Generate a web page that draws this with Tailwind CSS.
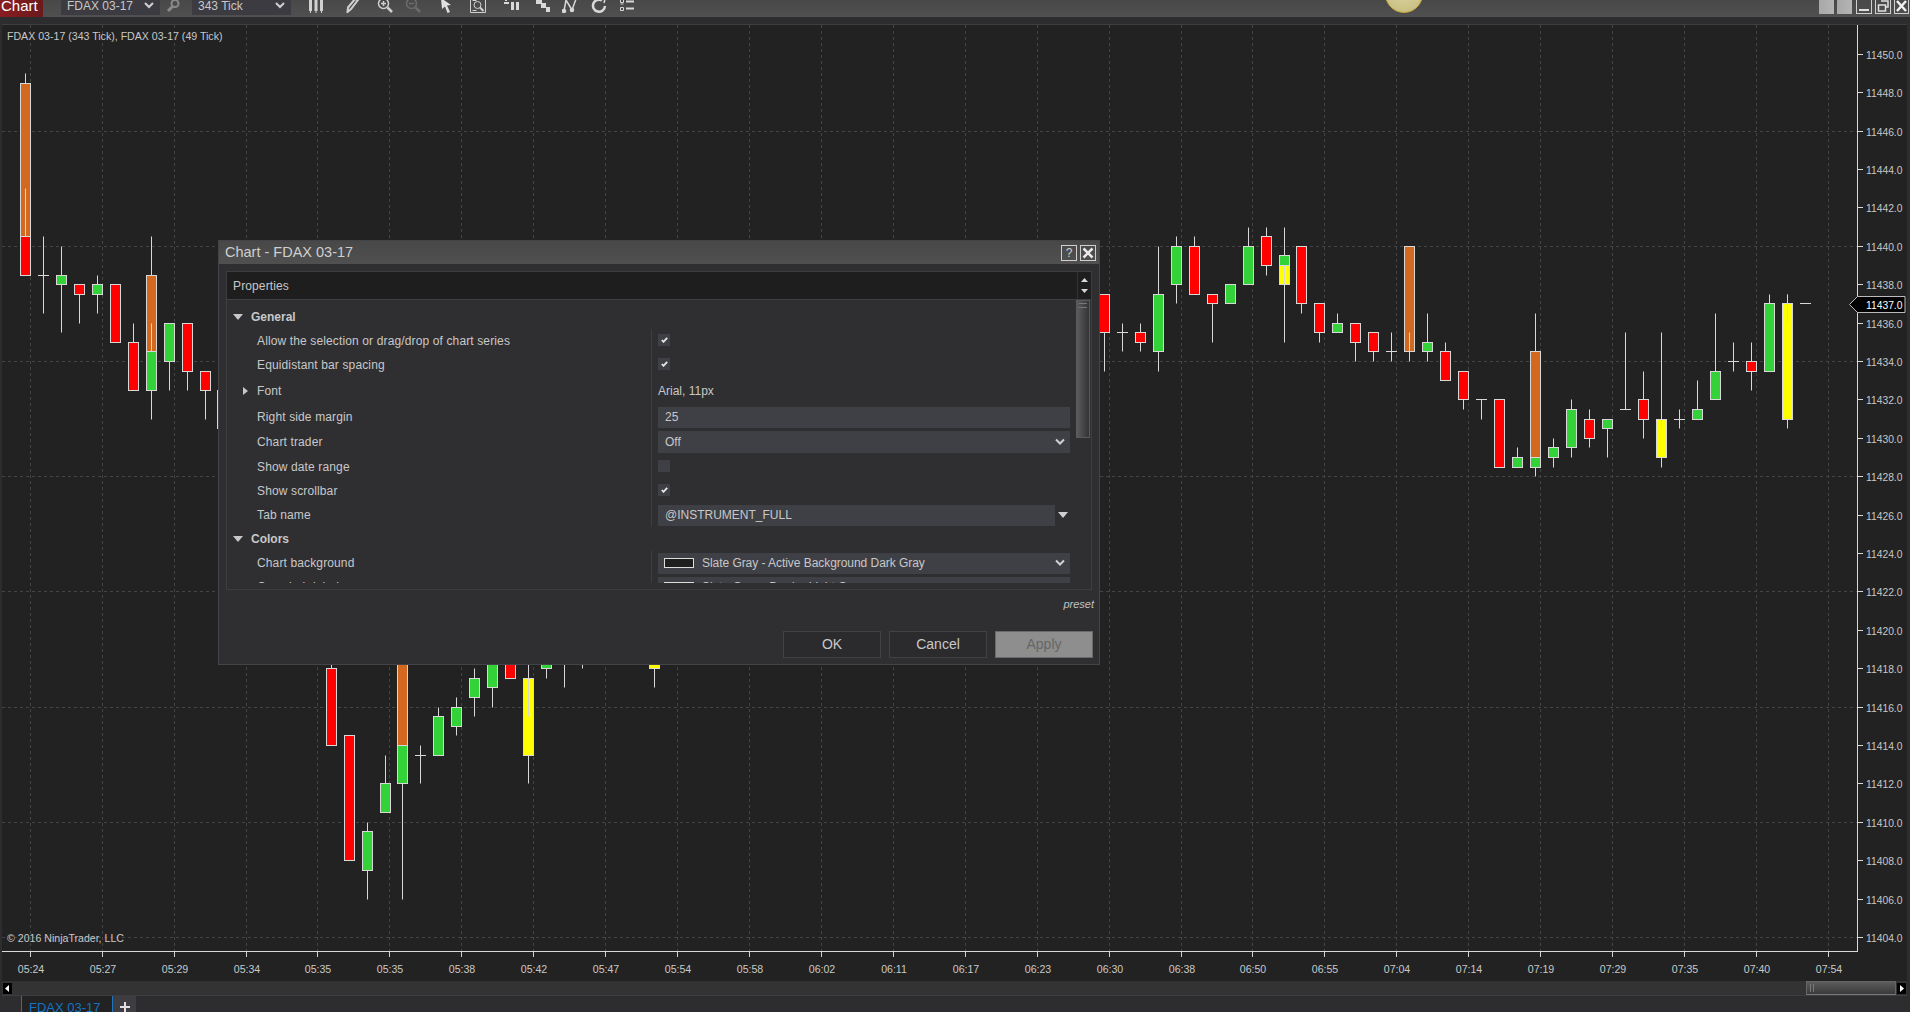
<!DOCTYPE html>
<html lang="en">
<head>
    <meta charset="UTF-8">
    <title>Chart - FDAX 03-17</title>
    <script src="https://cdn.jsdelivr.net/npm/@tailwindcss/browser@4"></script>
</head>
<body class="bg-[#2d2d30]">
<div class="relative w-[1910px] h-[1012px] overflow-hidden flex flex-col bg-[#2d2d30] text-[#c8c8c8] [font-family:'Liberation_Sans',sans-serif]">

    <!-- toolbar, cut off at the top like the reference -->
    <div class="h-[17px] shrink-0 flex items-start bg-gradient-to-b from-[#484848] to-[#505050] overflow-hidden text-[12px]">
        <div class="w-[43px] h-[17px] bg-gradient-to-r from-[#8a1c20] to-[#6a1a1c] text-white text-[15px] leading-[12px] pl-[1px]">Chart</div>
        <div class="ml-[18px] w-[99px] h-[15px] bg-[#3b3b41] flex items-start pl-[6px] leading-[13px]">
            <span>FDAX 03-17</span>
            <svg class="ml-auto mr-[6px] mt-[1px]" width="10" height="9" viewBox="0 0 10 9" fill="none" stroke="#d0d0d0" stroke-width="2"><path d="M1 2l4 4 4-4"/></svg>
        </div>
        <svg class="ml-[5px] -mt-[2px]" width="16" height="16" viewBox="0 0 16 16" fill="none" stroke="#8a8a8a" stroke-width="2"><circle cx="10" cy="5.500" r="3.500"/><path d="M7.500 8.500L3 13" stroke-width="3"/></svg>
        <div class="ml-[11px] w-[99px] h-[15px] bg-[#3b3b41] flex items-start pl-[6px] leading-[13px]">
            <span>343 Tick</span>
            <svg class="ml-auto mr-[6px] mt-[1px]" width="10" height="9" viewBox="0 0 10 9" fill="none" stroke="#d0d0d0" stroke-width="2"><path d="M1 2l4 4 4-4"/></svg>
        </div>
        <svg class="ml-[17px] -mt-[3px]" width="16" height="16" viewBox="0 0 16 16" fill="#d0d0d0"><rect x="1" y="3" width="3" height="11"/><rect x="6.500" y="2" width="3" height="12"/><rect x="12" y="3" width="3" height="11"/><rect x="2" y="14" width="1" height="2"/><rect x="7.500" y="14" width="1" height="2"/><rect x="13" y="14" width="1" height="2"/></svg>
        <svg class="ml-[21px] -mt-[3px]" width="16" height="16" viewBox="0 0 16 16" fill="none" stroke="#d0d0d0" stroke-width="2"><path d="M13 3L6 12 2.500 15l.5-4.500L10 2z"/></svg>
        <svg class="ml-[16px] -mt-[3px]" width="16" height="16" viewBox="0 0 16 16" fill="none" stroke="#d0d0d0" stroke-width="1.500"><circle cx="6.500" cy="6.500" r="5"/><path d="M4 6.500h5M6.500 4v5"/><path d="M10.500 10.500L15 15" stroke-width="2.500"/></svg>
        <svg class="ml-[12px] -mt-[3px]" width="16" height="16" viewBox="0 0 16 16" fill="none" stroke="#6c6c6c" stroke-width="1.500"><circle cx="6.500" cy="6.500" r="5"/><path d="M4 6.500h5"/><path d="M10.500 10.500L15 15" stroke-width="2.500"/></svg>
        <svg class="ml-[17px] -mt-[3px]" width="16" height="16" viewBox="0 0 16 16" fill="#e0e0e0"><path d="M3 1l10 7-4 .5L12 15l-2.500 1L7 9.500 4 12z"/></svg>
        <svg class="ml-[16px] -mt-[3px]" width="16" height="16" viewBox="0 0 16 16" fill="none" stroke="#d0d0d0"><path d="M.5.500h15v15H.5z"/><circle cx="7.500" cy="8" r="3.500"/><path d="M10 10.500l3.500 3.500" stroke-width="2"/><path d="M2.500 3.500h4M2.500 13.500h4"/></svg>
        <svg class="ml-[18px] -mt-[3px]" width="16" height="16" viewBox="0 0 16 16" fill="#d8d8d8"><rect x="0" y="5" width="5" height="2"/><rect x="7" y="5" width="3" height="8"/><rect x="12" y="5" width="3" height="8"/><rect x="1" y="2" width="2" height="2"/></svg>
        <svg class="ml-[15px] -mt-[3px]" width="16" height="16" viewBox="0 0 16 16" fill="#d8d8d8"><rect x="1" y="2" width="6" height="5"/><rect x="6" y="6" width="5" height="5"/><rect x="11" y="10" width="4" height="5"/></svg>
        <svg class="ml-[11px] -mt-[3px]" width="16" height="16" viewBox="0 0 16 16" fill="none" stroke="#d8d8d8" stroke-width="1.500"><path d="M2 14L4 3l6 10 4-11"/><circle cx="2" cy="14" r="1.500" fill="#d8d8d8"/><circle cx="10" cy="13" r="1.500" fill="#d8d8d8"/></svg>
        <svg class="ml-[13px] -mt-[3px]" width="16" height="16" viewBox="0 0 16 16" fill="none" stroke="#d8d8d8" stroke-width="2.500"><path d="M11 3.500A6 6 0 1 0 14 9"/><path d="M10 1l4 1-1 4" stroke-width="1.500"/></svg>
        <svg class="ml-[12px] -mt-[3px]" width="16" height="16" viewBox="0 0 16 16" fill="none" stroke="#d8d8d8"><path d="M1.500 2.500h3v3h-3zM1.500 10.500h3v3h-3z"/><path d="M7 4.500h8M7 11.500h8" stroke-width="2"/><path d="M1.500 7h3"/></svg>

        <div class="ml-auto flex items-start gap-[3px] pr-[1px]">
            <div class="w-[15px] h-[14px] bg-gradient-to-r from-[#a8a8a8] to-[#b4b4b4]"></div>
            <div class="w-[15px] h-[14px] mr-[1px] bg-gradient-to-r from-[#a8a8a8] to-[#b4b4b4]"></div>
            <div class="w-[16px] h-[14px] border border-t-0 border-[#cfcfcf] flex items-end justify-center pb-[2px]"><div class="w-[10px] h-[2px] bg-[#e0e0e0]"></div></div>
            <div class="w-[16px] h-[14px] border border-t-0 border-[#cfcfcf]">
                <svg width="14" height="13" viewBox="0 0 14 13" fill="none" stroke="#e0e0e0" stroke-width="1.500"><path d="M5 1h7v6H9.500M2.500 5h7v6h-7z"/></svg>
            </div>
            <div class="w-[15px] h-[14px] border border-t-0 border-[#cfcfcf]">
                <svg width="13" height="13" viewBox="0 0 13 13" fill="none" stroke="#f0f0f0" stroke-width="2.500"><path d="M2 1l9 10M11 1l-9 10"/></svg>
            </div>
        </div>
    </div>
    <!-- yellow light in the title bar -->
    <div class="absolute left-[1385px] -top-[25px] w-[38px] h-[38px] rounded-full border border-[#c9a53a] bg-[radial-gradient(circle_at_50%_30%,#ddd8a8,#c4bb78)]"></div>

    <div class="h-[7px] shrink-0 bg-[#2d2d30]"></div>

    <!-- chart -->
    <div class="relative h-[957px] shrink-0 mx-[2px] mr-[3px] border-t border-[#3e3e42] bg-[#222222]">
        <svg id="chart" class="absolute -left-[2px] top-0" width="1910" height="956" viewBox="0 25 1910 956" font-size="10.600" fill="#c8c8c8"></svg>
    </div>

    <!-- horizontal scrollbar -->
    <div class="h-[15px] shrink-0 mx-[2px] mr-[3px] bg-[#333333] border-b border-[#3e3e42] flex items-center">
        <div class="ml-[1px] w-[9px] h-[11px] bg-black flex items-center justify-center"><svg width="5" height="7" viewBox="0 0 5 7" fill="#fff"><path d="M4 0v7L0 3.500z"/></svg></div>
        <div class="ml-auto w-[90px] h-[14px] border border-[#666] border-b-[#777] bg-gradient-to-b from-[#5c5c5c] to-[#3a3a3a] flex items-center pl-[3px] gap-[2px]">
            <div class="w-px h-[8px] bg-[#777]"></div><div class="w-px h-[8px] bg-[#777]"></div>
        </div>
        <div class="ml-[1px] mr-[1px] w-[9px] h-[11px] bg-black flex items-center justify-center"><svg width="5" height="7" viewBox="0 0 5 7" fill="#fff"><path d="M1 0v7l4-3.500z"/></svg></div>
    </div>

    <!-- tabs -->
    <div class="flex-1 flex items-start pl-[21px]">
        <div class="w-[92px] h-[17px] bg-[#222222] border-x border-[#1f73bd] text-[#1573c4] text-[13px] leading-[23px] pl-[7px]">FDAX 03-17</div>
        <div class="w-[23px] h-[17px] bg-[#3e3e42] flex items-center justify-center pt-[5px]">
            <svg width="10" height="10" viewBox="0 0 10 10" fill="#e0e0e0"><path d="M4 0h2v4h4v2H6v4H4V6H0V4h4z"/></svg>
        </div>
    </div>

    <!-- properties dialog -->
    <div class="absolute left-[218px] top-[240px] w-[882px] h-[425px] bg-[#2f2f32] border border-[#444448] flex flex-col text-[12px]">
        <div class="h-[23px] shrink-0 bg-gradient-to-b from-[#484848] to-[#505050] flex items-center pl-[6px] pr-[3px] text-[14.500px] text-[#cfcfcf]">
            <span>Chart - FDAX 03-17</span>
            <div class="ml-auto w-[16px] h-[16px] border border-[#cfcfcf] flex items-center justify-center text-[12px] leading-none">?</div>
            <div class="ml-[3px] w-[16px] h-[16px] border border-[#cfcfcf] flex items-center justify-center">
                <svg width="12" height="12" viewBox="0 0 12 12" fill="none" stroke="#e8e8e8" stroke-width="2.500"><path d="M1.500 1.500l9 9M10.500 1.500l-9 9"/></svg>
            </div>
        </div>

        <div class="ml-[7px] mt-[7px] w-[866px] h-[319px] shrink-0 border border-[#3e3e42] flex flex-col">
            <div class="h-[28px] shrink-0 bg-[#1e1e1e] border-b border-[#404044] flex items-center pl-[6px]">
                <span class="tracking-[0.13px]">Properties</span>
                <div class="ml-auto w-[14px] h-full border-l border-[#333] flex flex-col items-center justify-center gap-[7px]">
                    <svg width="7" height="4" viewBox="0 0 7 4" fill="#d8d8d8"><path d="M0 4h7L3.500 0z"/></svg>
                    <svg width="7" height="4" viewBox="0 0 7 4" fill="#d8d8d8"><path d="M0 0h7L3.500 4z"/></svg>
                </div>
            </div>

            <div class="flex h-[283px] overflow-hidden">
                <div class="flex-1 pt-[5px]">
                    <div class="h-[24px] flex items-center pl-[6px] font-bold">
                        <svg width="10" height="6" viewBox="0 0 10 6" fill="#c8c8c8"><path d="M0 0h10L5 6z"/></svg>
                        <span class="ml-[8px]">General</span>
                    </div>
                    <div class="h-[24px] flex">
                        <div class="w-[424px] pl-[30px] flex items-center tracking-[0.13px]">Allow the selection or drag/drop of chart series</div>
                        <div class="flex-1 border-l border-[#3e3e42] pl-[6px] flex items-center">
                            <div class="w-[12px] h-[12px] mb-[2px] bg-[#3f3f46] flex items-center justify-center"><svg width="7" height="6" viewBox="0 0 7 6" fill="none" stroke="#e8e8e8" stroke-width="1.800"><path d="M.8 3l1.700 1.800L6.200.8"/></svg></div>
                        </div>
                    </div>
                    <div class="h-[24px] flex">
                        <div class="w-[424px] pl-[30px] flex items-center tracking-[0.13px]">Equidistant bar spacing</div>
                        <div class="flex-1 border-l border-[#3e3e42] pl-[6px] flex items-center">
                            <div class="w-[12px] h-[12px] mb-[2px] bg-[#3f3f46] flex items-center justify-center"><svg width="7" height="6" viewBox="0 0 7 6" fill="none" stroke="#e8e8e8" stroke-width="1.800"><path d="M.8 3l1.700 1.800L6.200.8"/></svg></div>
                        </div>
                    </div>
                    <div class="h-[28px] flex">
                        <div class="w-[424px] pl-[16px] flex items-center tracking-[0.13px]">
                            <svg width="5" height="8" viewBox="0 0 5 8" fill="#c8c8c8"><path d="M0 0l5 4-5 4z"/></svg>
                            <span class="ml-[9px]">Font</span>
                        </div>
                        <div class="flex-1 border-l border-[#3e3e42] pl-[6px] flex items-center">Arial, 11px</div>
                    </div>
                    <div class="h-[24px] flex">
                        <div class="w-[424px] pl-[30px] flex items-center tracking-[0.13px]">Right side margin</div>
                        <div class="flex-1 border-l border-[#3e3e42] pl-[6px] flex items-center">
                            <div class="w-[412px] h-[21px] bg-[#3f3f46] pl-[7px] flex items-center">25</div>
                        </div>
                    </div>
                    <div class="h-[26px] flex">
                        <div class="w-[424px] pl-[30px] flex items-center tracking-[0.13px]">Chart trader</div>
                        <div class="flex-1 border-l border-[#3e3e42] pl-[6px] flex items-center">
                            <div class="w-[412px] h-[22px] bg-[#3f3f46] pl-[7px] pr-[5px] flex items-center">
                                <span>Off</span>
                                <svg class="ml-auto" width="10" height="8" viewBox="0 0 10 8" fill="none" stroke="#d0d0d0" stroke-width="2"><path d="M1 1.500l4 4 4-4"/></svg>
                            </div>
                        </div>
                    </div>
                    <div class="h-[24px] flex">
                        <div class="w-[424px] pl-[30px] flex items-center tracking-[0.13px]">Show date range</div>
                        <div class="flex-1 border-l border-[#3e3e42] pl-[6px] flex items-center">
                            <div class="w-[12px] h-[12px] mb-[2px] bg-[#3f3f46]"></div>
                        </div>
                    </div>
                    <div class="h-[24px] flex">
                        <div class="w-[424px] pl-[30px] flex items-center tracking-[0.13px]">Show scrollbar</div>
                        <div class="flex-1 border-l border-[#3e3e42] pl-[6px] flex items-center">
                            <div class="w-[12px] h-[12px] mb-[2px] bg-[#3f3f46] flex items-center justify-center"><svg width="7" height="6" viewBox="0 0 7 6" fill="none" stroke="#e8e8e8" stroke-width="1.800"><path d="M.8 3l1.700 1.800L6.200.8"/></svg></div>
                        </div>
                    </div>
                    <div class="h-[24px] flex">
                        <div class="w-[424px] pl-[30px] flex items-center tracking-[0.13px]">Tab name</div>
                        <div class="flex-1 border-l border-[#3e3e42] pl-[6px] flex items-center">
                            <div class="w-[397px] h-[21px] bg-[#3f3f46] pl-[7px] flex items-center">@INSTRUMENT_FULL</div>
                            <svg class="ml-[3px]" width="10" height="6" viewBox="0 0 10 6" fill="#d0d0d0"><path d="M0 0h10L5 6z"/></svg>
                        </div>
                    </div>
                    <div class="h-[24px] flex items-center pl-[6px] font-bold">
                        <svg width="10" height="6" viewBox="0 0 10 6" fill="#c8c8c8"><path d="M0 0h10L5 6z"/></svg>
                        <span class="ml-[8px]">Colors</span>
                    </div>
                    <div class="h-[24px] flex">
                        <div class="w-[424px] pl-[30px] flex items-center tracking-[0.13px]">Chart background</div>
                        <div class="flex-1 border-l border-[#3e3e42] pl-[6px] flex items-center">
                            <div class="w-[412px] h-[21px] bg-[#3f3f46] pl-[6px] pr-[5px] flex items-center">
                                <div class="w-[30px] h-[10px] bg-[#1f1f1f] border border-[#ddd]"></div>
                                <span class="ml-[8px] tracking-[-0.05px]">Slate Gray - Active Background Dark Gray</span>
                                <svg class="ml-auto" width="10" height="8" viewBox="0 0 10 8" fill="none" stroke="#d0d0d0" stroke-width="2"><path d="M1 1.500l4 4 4-4"/></svg>
                            </div>
                        </div>
                    </div>
                    <div class="h-[24px] flex">
                        <div class="w-[424px] pl-[30px] flex items-center tracking-[0.13px]">Crosshair label</div>
                        <div class="flex-1 border-l border-[#3e3e42] pl-[6px] flex items-center">
                            <div class="w-[412px] h-[21px] bg-[#3f3f46] pl-[6px] pr-[5px] flex items-center">
                                <div class="w-[30px] h-[10px] bg-[#555] border border-[#ddd]"></div>
                                <span class="ml-[8px]">Slate Gray - Border Light Gray</span>
                            </div>
                        </div>
                    </div>
                </div>
                <div class="w-[15px] shrink-0">
                    <div class="w-[14px] h-[138px] border border-[#5a5a5a] bg-gradient-to-r from-[#5c5c5c] to-[#333336] pt-[2px] pl-[2px] flex flex-col gap-[3px]">
                        <div class="w-[8px] h-px bg-[#777]"></div>
                        <div class="w-[8px] h-px bg-[#777]"></div>
                    </div>
                </div>
            </div>
        </div>

        <div class="mt-[7px] h-[14px] shrink-0 pr-[5px] flex items-center justify-end italic text-[11px] text-[#c0c0c0]">preset</div>
        <div class="mt-[20px] flex justify-end gap-[8px] pr-[6px] text-[14px]">
            <div class="w-[98px] h-[27px] bg-[#2b2b2e] border border-[#424246] flex items-center justify-center">OK</div>
            <div class="w-[98px] h-[27px] bg-[#2b2b2e] border border-[#424246] flex items-center justify-center">Cancel</div>
            <div class="w-[98px] h-[27px] bg-[#8e8e8e] border border-[#6a6a6a] text-[#666] flex items-center justify-center">Apply</div>
        </div>
    </div>
</div>

<script>
    const chart = document.getElementById("chart");
    const yOf = p => 246.3 + (11440 - p) * 19.2;
    const snap = v => Math.floor(v) + 0.5;
    const barX = n => snap(25.4 + 17.98 * n);
    const colors = { r: "#ff0000", g: "#32d238", o: "#d2691e", y: "#ffff00" };
    const times = ["05:24","05:27","05:29","05:34","05:35","05:35","05:38","05:42","05:47","05:54","05:58","06:02","06:11","06:17","06:23","06:30","06:38","06:50","06:55","07:04","07:14","07:19","07:29","07:35","07:40","07:54"];

    // [bar, colour, top, bottom, high, low] in price; no colour = only a dash at "top"
    const bars = [
        [0,"o",11448.5,11440.5,11449,null],[0,"r",11440.5,11438.5,null,null],
        [1,null,11438.5,0,11440.5,11436.5],[2,"g",11438.5,11438,11440,11435.5],[3,"r",11438,11437.5,null,11436],
        [4,"g",11438,11437.5,11438.5,11436.5],[5,"r",11438,11435,null,null],[6,"r",11435,11432.5,11436,null],
        [7,"o",11438.5,11434.5,11440.5,null],[7,"g",11434.5,11432.5,null,11431],
        [8,"g",11436,11434,null,11432.5],[9,"r",11436,11433.5,null,11432.5],[10,"r",11433.5,11432.5,null,11431],
        [17,"r",11418,11414,11420,null],[18,"r",11414.5,11408,null,null],[19,"g",11409.5,11407.5,11410,11406],
        [20,"g",11412,11410.5,11413.5,null],[21,"o",11420,11414,null,null],[21,"g",11414,11412,null,11406],
        [22,null,11413.5,0,11414,11412],[23,"g",11415.5,11413.5,11416,null],[24,"g",11416,11415,11416.5,11414.5],
        [25,"g",11417.5,11416.5,11418,11415.5],[26,"g",11420,11417,null,11416],[27,"r",11420,11417.5,null,null],
        [28,"y",11417.5,11413.5,11420,11412],[29,"g",11420,11418,null,11417.5],[35,"y",11420,11418,null,11417],
        [60,"r",11437.5,11435.5,null,11433.5],[61,null,11435.5,0,11436,11434.5],[62,"r",11435.5,11435,11436,11434.5],
        [63,"g",11437.5,11434.5,11440,11433.5],[64,"g",11440,11438,11440.5,11437],[65,"r",11440,11437.5,11440.5,null],
        [66,"r",11437.5,11437,null,11435],[67,"g",11438,11437,null,null],[68,"g",11440,11438,11441,null],
        [69,"r",11440.5,11439,11441,11438.5],[70,"g",11439.5,11439,11441,null],[70,"y",11439,11438,null,11435],
        [71,"r",11440,11437,null,11436.5],[72,"r",11437,11435.5,null,11435],[73,"g",11436,11435.5,11436.5,null],
        [74,"r",11436,11435,null,11434],[75,"r",11435.5,11434.5,null,11434],[76,null,11434.5,0,11435.5,11434],
        [77,"o",11440,11434.5,null,null],[78,"g",11435,11434.5,11436.5,11434],[79,"r",11434.5,11433,11435,null],
        [80,"r",11433.5,11432,null,11431.5],[81,null,11432,0,null,11431],[82,"r",11432,11428.5,null,null],
        [83,"g",11429,11428.5,11429.5,null],[84,"o",11434.5,11429,11436.5,null],[84,"g",11429,11428.5,null,11428],
        [85,"g",11429.5,11429,11430,11428.5],[86,"g",11431.5,11429.5,11432,11429],[87,"r",11431,11430,11431.5,11429.5],
        [88,"g",11431,11430.5,null,11429],[89,null,11431.5,0,11435.5,null],[90,"r",11432,11431,11433.5,11430],
        [91,"y",11431,11429,11435.5,11428.5],[92,null,11431,0,11431.5,11430.5],[93,"g",11431.5,11431,11433,null],
        [94,"g",11433.5,11432,11436.5,null],[95,null,11434,0,11435,11433.5],[96,"r",11434,11433.5,11435,11432.5],
        [97,"g",11437,11433.5,11437.5,null],[98,"y",11437,11431,11437.5,11430.5],[99,null,11437,0,null,null],
    ];
    // wicks of the second series, they lie over the bodies of the first
    const overWicks = [[0,11443,11440.5],[7,11436,11434.5],[28,11420,11415.5],[30,11420,11417],[31,11420,11418],[70,11439,11438],[77,11435.5,11434],[91,11431,11430.5],[98,11437.5,11436]];

    let s = "";
    const line = (x1, y1, x2, y2, stroke, dash) =>
        `<line x1="${x1}" y1="${y1}" x2="${x2}" y2="${y2}" stroke="${stroke}"${dash ? ' stroke-dasharray="3 3"' : ""}/>`;

    // grid
    for (let p = 11446; p >= 11404; p -= 6) s += line(2, snap(yOf(p)), 1857, snap(yOf(p)), "#444444", true);
    times.forEach((t, i) => {
        const x = snap(30.3 + 71.92 * i);
        s += line(x, 25, x, 951, "#444444", true);
        s += line(x, 951, x, 957, "#d0d0d0");
        s += `<text x="${x + 0.5}" y="973" text-anchor="middle">${t}</text>`;
    });

    // candles
    bars.forEach(([n, c, top, bottom, hi, lo]) => {
        const x = barX(n), t = snap(yOf(top));
        if (hi) s += line(x, snap(yOf(hi)), x, t, "#d8d8d8");
        if (c) {
            const b = snap(yOf(bottom));
            if (lo) s += line(x, b, x, snap(yOf(lo)), "#d8d8d8");
            s += `<rect x="${x - 5}" y="${t}" width="10" height="${b - t}" fill="${colors[c]}" stroke="#d8d8d8"/>`;
        } else {
            if (lo) s += line(x, t, x, snap(yOf(lo)), "#d8d8d8");
            s += line(x - 5.5, t, x + 5.5, t, "#d8d8d8");
        }
    });
    overWicks.forEach(([n, a, b]) => { s += line(barX(n), snap(yOf(a)), barX(n), snap(yOf(b)), "#d8d8d8"); });
    s += line(217.5, 390, 217.5, 429, "#d8d8d8");

    // axes
    s += line(2, 951.5, 1857, 951.5, "#d8d8d8");
    s += line(1857.5, 25, 1857.5, 952, "#d8d8d8");
    for (let p = 11450; p >= 11404; p -= 2) {
        const y = snap(yOf(p));
        s += line(1857, y, 1863, y, "#d8d8d8");
        s += `<text x="1866" y="${y + 4.5}" font-size="10.300">${p}.0</text>`;
    }

    // current price tag
    s += `<path d="M1849.500 304.500L1857.500 296.500H1905V312.500H1857.500Z" fill="#000" stroke="#bbbbbb"/>`;
    s += `<text x="1866" y="309" font-size="10.300" fill="#fff">11437.0</text>`;

    s += `<text x="7" y="40">FDAX 03-17 (343 Tick), FDAX 03-17 (49 Tick)</text>`;
    s += `<text x="7" y="942">© 2016 NinjaTrader, LLC</text>`;
    chart.innerHTML = s;
</script>
</body>
</html>
